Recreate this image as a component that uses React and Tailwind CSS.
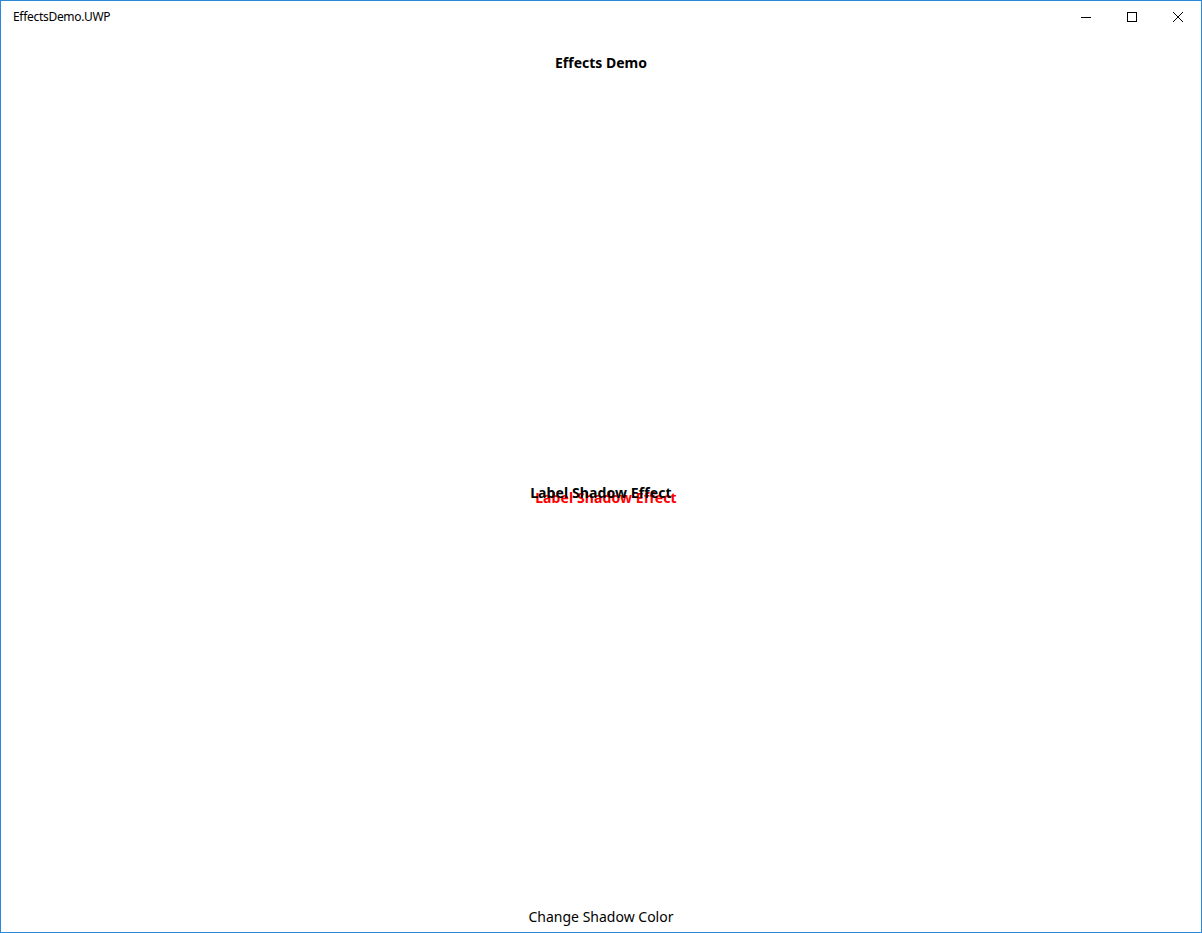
import React from 'react';

function TitleBar() {
  return (
    <div className="flex h-[31px] items-center justify-between">
      <span className="pl-[12px] text-[12px] tracking-[-0.3px] text-black">EffectsDemo.UWP</span>
      <div className="flex h-full">
        <button className="flex h-full w-[46px] items-center justify-center">
          <svg width="10" height="10" viewBox="0 0 10 10">
            <path d="M0 5.5h10" stroke="#000" strokeWidth="1" />
          </svg>
        </button>
        <button className="flex h-full w-[46px] items-center justify-center">
          <svg width="10" height="10" viewBox="0 0 10 10">
            <rect x="0.5" y="0.5" width="9" height="9" fill="none" stroke="#000" strokeWidth="1" />
          </svg>
        </button>
        <button className="flex h-full w-[46px] items-center justify-center">
          <svg width="10" height="10" viewBox="0 0 10 10">
            <path d="M0 0L10 10M10 0L0 10" stroke="#000" strokeWidth="1" />
          </svg>
        </button>
      </div>
    </div>
  );
}

export default function App() {
  return (
    <div className="flex h-[933px] w-[1202px] flex-col border border-[#2b88d8] bg-white font-['Noto_Sans',sans-serif] text-black">
      <TitleBar />
      <div className="flex flex-1 flex-col">
        <div className="flex h-[60px] items-center justify-center">
          <h1 className="text-[14px] font-bold">Effects Demo</h1>
        </div>
        <div className="flex flex-1 items-center justify-center pb-[8px]">
          <div className="relative whitespace-nowrap text-[14px] font-bold tracking-[0.1px]">
            <span className="absolute left-[5px] top-[5px] text-[#ff0000]">Label Shadow Effect</span>
            <span className="relative">Label Shadow Effect</span>
          </div>
        </div>
        <div className="flex h-[32px] items-center justify-center">
          <button className="text-[14px]">Change Shadow Color</button>
        </div>
      </div>
    </div>
  );
}
